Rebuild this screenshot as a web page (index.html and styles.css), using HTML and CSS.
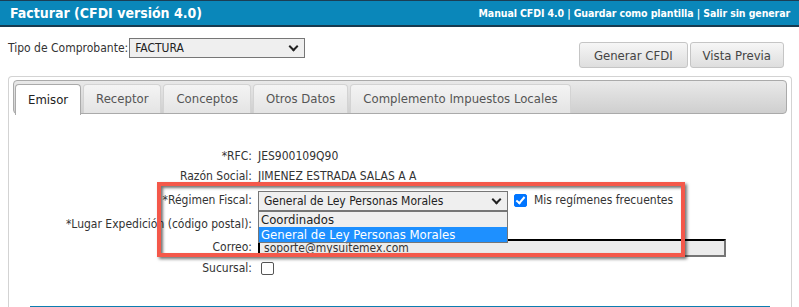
FILE: index.html
```html
<!doctype html>
<html>
	<head>
		<title>Facturar (CFDI versión 4.0)</title>
		<link rel="stylesheet" href="styles.css">
	</head>
	<body>
		<div class="header">
			<h1>Facturar (CFDI versión 4.0)</h1>
			<div class="links">
				<a href="#">Manual CFDI 4.0</a> | <a href="#">Guardar como plantilla</a> | <a href="#">Salir sin generar</a>
			</div>
		</div>

		<div class="toolbar">
			<label class="tipo">Tipo de Comprobante:
				<span class="select tipoSelect">FACTURA<span class="chev"></span></span>
			</label>
			<div class="actions">
				<button>Generar CFDI</button>
				<button>Vista Previa</button>
			</div>
		</div>

		<div class="panel">
			<ul class="tabs">
				<li class="active">Emisor</li>
				<li>Receptor</li>
				<li>Conceptos</li>
				<li>Otros Datos</li>
				<li>Complemento Impuestos Locales</li>
			</ul>

			<div class="form">
				<div class="row">
					<span class="lbl">*RFC:</span>
					<span class="val">JES900109Q90</span>
				</div>
				<div class="row">
					<span class="lbl">Razón Social:</span>
					<span class="val">JIMENEZ ESTRADA SALAS A A</span>
				</div>
				<div class="row regimen">
					<span class="lbl">*Régimen Fiscal:</span>
					<span class="val">
						<span class="select regSelect">General de Ley Personas Morales<span class="chev"></span>
							<ul class="options">
								<li>Coordinados</li>
								<li class="hl">General de Ley Personas Morales</li>
							</ul>
						</span>
						<span class="check on"></span> Mis regímenes frecuentes
					</span>
				</div>
				<div class="row lugar">
					<span class="lbl">*Lugar Expedición (código postal):</span>
					<span class="val"></span>
				</div>
				<div class="row correo">
					<span class="lbl">Correo:</span>
					<span class="val"><span class="input">soporte@mysuitemex.com</span></span>
				</div>
				<div class="row sucursal">
					<span class="lbl">Sucursal:</span>
					<span class="val"><span class="check"></span></span>
				</div>
			</div>
			<div class="rule"></div>

			<div class="mark"></div>
		</div>
	</body>
</html>
```

FILE: styles.css
```css
html, body {
	margin: 0;
	padding: 0;
	font-family: "DejaVu Sans", sans-serif;
	font-stretch: condensed;
	font-size: 12px;
	color: #333;
	background: #fff;
	height: 307px;
	overflow: hidden;
}

.header {
	display: flex;
	justify-content: space-between;
	align-items: center;
	height: 24px;
	background-color: #0a87ba;
	border-top: 1px solid #1b3e55;
	border-bottom: 2px solid #173a50;
	padding: 0 9px 0 10px;
	color: white;
}

.header h1 {
	margin: 0;
	font-size: 14px;
	font-weight: bold;
}

.header .links {
	font-size: 10.5px;
	font-weight: bold;
	letter-spacing: -0.1px;
}

.header a {
	color: white;
	text-decoration: none;
}

.toolbar {
	display: flex;
	justify-content: space-between;
	padding: 11px 15px 0 8px;
	height: 38px;
}

.tipo {
	display: flex;
	align-items: flex-start;
	gap: 1px;
	line-height: 20px;
}

.select {
	position: relative;
	display: inline-block;
	box-sizing: border-box;
	height: 20px;
	line-height: 18px;
	border: 1px solid #767676;
	background-color: #efefef;
	padding-left: 5px;
	color: #222;
	font-size: 12px;
}

.tipoSelect { width: 176px; }

.chev {
	position: absolute;
	right: 7px;
	top: 4px;
	width: 5px;
	height: 5px;
	border-right: 2px solid #222;
	border-bottom: 2px solid #222;
	transform: rotate(45deg);
}

.actions {
	display: flex;
	gap: 2px;
	padding-top: 4px;
}

button {
	font-family: inherit;
	font-stretch: condensed;
	font-size: 13px;
	color: #444;
	height: 26px;
	padding: 0 12px;
	border: 1px solid #c5c5c5;
	border-radius: 3px;
	background: linear-gradient(#f6f6f6, #dedede);
}

button:first-child { padding: 0 14px; }

.panel {
	position: relative;
	margin: 0 7px 0 8px;
	height: 224px;
	border: 1px solid #d3d3d3;
	border-bottom: none;
	border-radius: 4px 4px 0 0;
	padding: 3px 4px;
}

.tabs {
	list-style: none;
	margin: 0;
	padding: 3px 0 0 1px;
	height: 29px;
	display: flex;
	gap: 2px;
	border: 1px solid #aaa;
	border-radius: 4px;
	background: linear-gradient(#e9e9e9, #cfcfcf);
}

.tabs li {
	padding: 0 12px;
	line-height: 28px;
	font-size: 13px;
	color: #555;
	border: 1px solid #d3d3d3;
	border-bottom: none;
	border-radius: 4px 4px 0 0;
	background: linear-gradient(#f4f4f4, #e4e4e4);
}

.tabs li.active {
	background: #fff;
	color: #222;
	border-color: #aaa;
	padding: 0 12px;
	line-height: 29px;
	height: 30px;
}

.form {
	padding-top: 32px;
}

.row {
	display: grid;
	grid-template-columns: 239px 1fr;
	column-gap: 6px;
	height: 20px;
	line-height: 20px;
}

.row.regimen { margin-top: 4px; }
.row.lugar { margin-top: 4px; }
.row.correo { margin-top: 3px; }
.row.sucursal { margin-top: 1px; }

.lbl { text-align: right; }

.val {
	position: relative;
	display: flex;
	align-items: center;
	gap: 6px;
}

.regSelect { width: 250px; top: 1px; }

.options {
	position: absolute;
	left: -1px;
	top: 19px;
	width: 250px;
	box-sizing: border-box;
	margin: 0;
	padding: 0;
	list-style: none;
	border: 1px solid #767676;
	background: #efefef;
	z-index: 2;
	font-size: 13px;
}

.options li {
	line-height: 15px;
	padding-left: 2px;
	color: #222;
}

.options li.hl {
	background: #1e90ff;
	color: white;
}

.check {
	display: inline-block;
	box-sizing: border-box;
	width: 13px;
	height: 13px;
	border: 1px solid #555;
	border-radius: 2px;
	background: #fff;
}

.check.on {
	position: relative;
	background: #0075ff;
	border-color: #0075ff;
	margin-right: 1px;
}

.check.on::after {
	content: "";
	position: absolute;
	left: 3px;
	top: 0px;
	width: 3px;
	height: 7px;
	border-right: 2px solid white;
	border-bottom: 2px solid white;
	transform: rotate(40deg);
}

.row.sucursal .check { margin-left: 3px; }

.input {
	box-sizing: border-box;
	width: 468px;
	height: 18px;
	margin-top: 2px;
	line-height: 14px;
	background: #ececec;
	border: 2px inset #767676;
	border-top-color: #222;
	border-left-color: #222;
	padding-left: 4px;
	color: #333;
}

.rule {
	margin: 28px 17px 0 17px;
	height: 2px;
	background: #0d7db0;
}

.mark {
	position: absolute;
	left: 148px;
	top: 105px;
	width: 520px;
	height: 67px;
	border: 4px solid #f4584a;
	box-shadow: 2px 2px 3px rgba(0, 0, 0, 0.55), inset 2px 2px 3px rgba(0, 0, 0, 0.55);
	z-index: 3;
}
```
